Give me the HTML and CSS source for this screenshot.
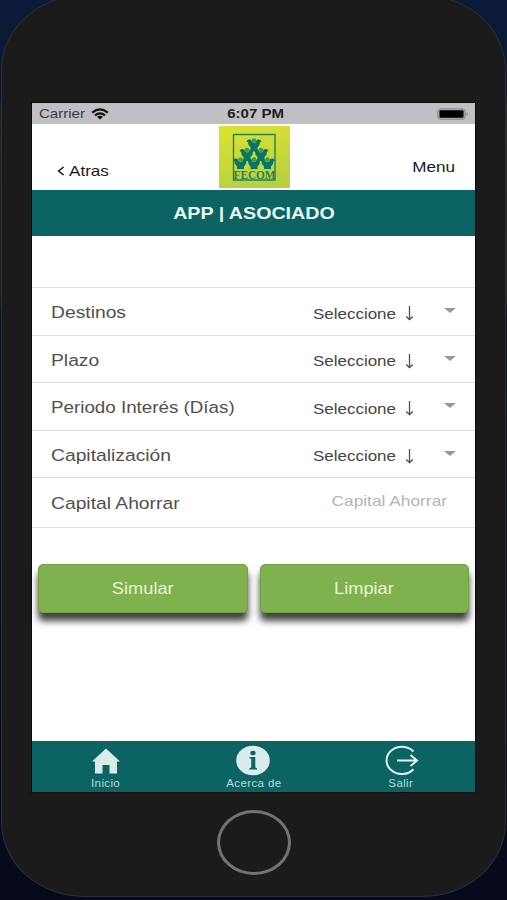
FILE: index.html
```html
<!DOCTYPE html>
<html lang="es">
<head>
    <meta charset="UTF-8">
    <meta name="viewport" content="width=device-width, initial-scale=1.0">
    <title>FECOM | Asociado</title>
    <link rel="stylesheet" href="styles.css">
</head>
<body>
  <div class="phone">
    <div class="screen">
      <div class="status">
        <div class="carrier">
          <span class="wide left">Carrier</span>
          <svg class="wifi" viewBox="0 0 18 12">
            <path d="M1.200 4.600Q9-1.800 16.800 4.600M4 7.300Q9 3.400 14 7.300" fill="none" stroke="#111" stroke-width="2.200"/>
            <path d="M6 8.800Q9 6.800 12 8.800L9 11.500z" fill="#111"/>
          </svg>
        </div>
        <b class="wide">6:07 PM</b>
        <svg class="battery" viewBox="0 0 32 12">
          <rect x=".8" y=".8" width="27.400" height="10.400" rx="2.500" fill="#aaa9ad" stroke="#8a898d"/>
          <rect x="2.500" y="2.200" width="24" height="7.600" rx="1" fill="#000"/>
          <path d="M29.700 4.200q2 1.800 0 3.600z" fill="#77767a"/>
        </svg>
      </div>

      <header class="header">
        <a class="back">
          <svg viewBox="0 0 8 10"><path d="M6.600 1L1.600 5l5 4" fill="none" stroke="#111" stroke-width="1.500"/></svg>
          <span class="wide left">Atras</span>
        </a>
        <svg class="logo" viewBox="0 0 71 62">
          <defs>
            <linearGradient id="lime" x1="0" y1="0" x2=".3" y2="1">
              <stop offset="0" stop-color="#dce42f"/>
              <stop offset="1" stop-color="#b9d13f"/>
            </linearGradient>
            <g id="plant">
              <path d="M-7.500-3.500Q-6.500-6-4-5.500-2-5-1.800-2.800 0-1.200 1.800-2.800 2-5 4-5.500 6.500-6 7.500-3.500L6-2.800Q6 1 3.500 2.500V5H-3.500V2.500Q-6 1-6-2.800z" fill="#0b7565"/>
              <circle cy="-4.500" r="2.300" fill="#3aa04c"/>
            </g>
          </defs>
          <rect width="71" height="62" fill="url(#lime)"/>
          <path d="M14.500 54V8.500H56V54z" fill="none" stroke="#23835a" stroke-width="1.400"/>
          <use href="#plant" x="35" y="19"/>
          <use href="#plant" x="28" y="28.500"/>
          <use href="#plant" x="42" y="28.500"/>
          <use href="#plant" x="21.500" y="38"/>
          <use href="#plant" x="35" y="38"/>
          <use href="#plant" x="48.500" y="38"/>
          <text x="14.500" y="53.300" textLength="42" lengthAdjust="spacingAndGlyphs">FECOM</text>
        </svg>
        <a class="menu wide right">Menu</a>
      </header>

      <div class="title"><span class="wide">APP | ASOCIADO</span></div>

      <form class="form">
        <div class="row">
          <label class="wide left">Destinos</label>
          <div class="select">
            <span class="wide left">Seleccione</span>
            <svg class="arrow" viewBox="0 0 9 15"><path d="M4.500 0V13M1.200 10.500L4.500 13.500 7.800 10.500" /></svg>
            <i class="caret"></i>
          </div>
        </div>
        <div class="row">
          <label class="wide left">Plazo</label>
          <div class="select">
            <span class="wide left">Seleccione</span>
            <svg class="arrow" viewBox="0 0 9 15"><path d="M4.500 0V13M1.200 10.500L4.500 13.500 7.800 10.500" /></svg>
            <i class="caret"></i>
          </div>
        </div>
        <div class="row">
          <label class="wide left long">Periodo Interés (Días)</label>
          <div class="select">
            <span class="wide left">Seleccione</span>
            <svg class="arrow" viewBox="0 0 9 15"><path d="M4.500 0V13M1.200 10.500L4.500 13.500 7.800 10.500" /></svg>
            <i class="caret"></i>
          </div>
        </div>
        <div class="row">
          <label class="wide left">Capitalización</label>
          <div class="select">
            <span class="wide left">Seleccione</span>
            <svg class="arrow" viewBox="0 0 9 15"><path d="M4.500 0V13M1.200 10.500L4.500 13.500 7.800 10.500" /></svg>
            <i class="caret"></i>
          </div>
        </div>
        <div class="row last">
          <label class="wide left">Capital Ahorrar</label>
          <span class="hint wide right">Capital Ahorrar</span>
        </div>
      </form>

      <div class="buttons">
        <button type="button"><span class="wide">Simular</span></button>
        <button type="button"><span class="wide">Limpiar</span></button>
      </div>

      <footer class="tabs">
        <a class="tab">
          <svg viewBox="0 0 36 32"><path d="M18 3.500L4 16.500H7V28.500H14.500V20H21.500V28.500H29V16.500H32z" fill="#d9eceb"/></svg>
          <span class="wide">Inicio</span>
        </a>
        <a class="tab">
          <svg viewBox="0 0 36 32">
            <ellipse cx="18" cy="15.500" rx="16.800" ry="14.700" fill="#d9eceb"/>
            <ellipse cx="18" cy="8" rx="2.700" ry="2.200" fill="#0b6462"/>
            <path d="M14.500 12H20.300V22.500L22 23.300V24.500H14.300V23.300L16.200 22.500V13.800L14.500 13.300z" fill="#0b6462"/>
          </svg>
          <span class="wide">Acerca de</span>
        </a>
        <a class="tab">
          <svg viewBox="0 0 36 32">
            <path d="M30.500 6.500A15.300 13.700 0 1 0 30.500 24.300M14 15.500H33.500M27.500 10L34 15.500 27.500 21" fill="none" stroke="#e0f1f0" stroke-width="2"/>
          </svg>
          <span class="wide">Salir</span>
        </a>
      </footer>
    </div>
    <div class="home"></div>
  </div>
</body>
</html>
```
FILE: styles.css
```css
* {
  box-sizing: border-box;
}
body {
  margin: 0;
  height: 900px;
  overflow: hidden;
  background: linear-gradient(#0b1b38 0, #0b1830 100px, #25262b 105px, #1c1e24 300px, #0a1024 315px, #060a1b 900px);
  font-family: "Liberation Sans", Arial, sans-serif;
}
.phone {
  width: 503px;
  height: 900px;
  margin: -4px 0 0 2px;
  padding-top: 107px;
  background: #1b1b1b;
  border-radius: 82px / 74px;
  box-shadow: 0 0 0 1px #2b3038;
}
.screen {
  display: flex;
  flex-direction: column;
  width: 443px;
  height: 689px;
  margin-left: 30px;
  background: #fff;
  box-shadow: 0 0 0 1px #0c0c0c;
}
/* the simulator window is stretched sideways */
.wide {
  display: inline-block;
  transform: scaleX(1.155);
  white-space: nowrap;
}
.left {
  transform-origin: left;
}
.right {
  transform-origin: right;
}
.status {
  display: grid;
  grid-template-columns: 1fr auto 1fr;
  align-items: center;
  height: 21px;
  padding: 0 6px 0 7px;
  background: #c0bfc4;
  color: #1c1c1e;
  font-size: 13px;
}
.status b {
  position: relative;
  left: 2px;
}
.carrier {
  display: flex;
  align-items: center;
  color: #3a3a3c;
}
.carrier .left {
  width: 52px;
}
.wifi {
  width: 18px;
  height: 12px;
}
.battery {
  width: 32px;
  height: 12px;
  justify-self: end;
}
.header {
  display: grid;
  grid-template-columns: 1fr 71px 1fr;
  height: 66px;
  padding: 2px 20px 0 25px;
  color: #1a1a1a;
  font-size: 14.800px;
}
.back {
  display: flex;
  align-items: center;
  gap: 4px;
  padding-top: 25px;
}
.back svg {
  width: 8px;
  height: 10px;
}
.logo {
  position: relative;
  left: -2px;
  width: 71px;
  height: 62px;
}
.logo text {
  font: bold 12px "Liberation Serif", serif;
  fill: #23835a;
}
.menu {
  justify-self: end;
  padding-top: 33px;
}
.title {
  height: 46px;
  background: #0b6462;
  color: #e9f7f6;
  font-size: 17px;
  font-weight: bold;
  line-height: 47px;
  text-align: center;
}
.form {
  margin-top: 51px;
  border-top: 1px solid #dedede;
}
.row {
  display: flex;
  align-items: center;
  justify-content: space-between;
  height: 47.500px;
  padding: 4px 19px 0 19px;
  border-bottom: 1px solid #dedede;
  color: #505050;
  font-size: 16.700px;
}
.row .long {
  transform: scaleX(1.125);
}
.row.last {
  height: 49.500px;
  padding: 4px 28px 0 19px;
}
.select {
  display: flex;
  align-items: center;
  width: 143px;
  padding-top: 1px;
  color: #454545;
  font-size: 14.700px;
}
.select .left {
  width: 92px;
}
.arrow {
  width: 9px;
  height: 15px;
}
.arrow path {
  fill: none;
  stroke: #505050;
  stroke-width: 1.300;
}
.caret {
  margin: -6px 0 0 auto;
  border: 6px solid transparent;
  border-top: 5.500px solid #999;
  border-bottom: 0;
}
.hint {
  margin-top: -7px;
  color: #b5b5b5;
  font-size: 15px;
}
.buttons {
  display: flex;
  gap: 12px;
  margin-top: 36px;
  padding: 0 6px;
}
.buttons button {
  flex: 1;
  height: 49px;
  padding: 1px 0 0;
  border: 1px solid #6fa242;
  border-radius: 5px;
  background: #7fb24f;
  box-shadow: 0 8px 7px rgba(0, 0, 0, .75);
  color: #e6f5d5;
  font-family: inherit;
  font-size: 15.800px;
}
.tabs {
  display: grid;
  grid-template-columns: repeat(3, 1fr);
  height: 51px;
  margin-top: auto;
  background: #0b6462;
}
.tab {
  display: flex;
  flex-direction: column;
  align-items: center;
  padding-top: 4px;
  color: #b9d9d8;
  font-size: 10px;
  line-height: 12px;
  letter-spacing: .3px;
}
.tab svg {
  width: 36px;
  height: 32px;
}
.tab .wide {
  margin-top: 1px;
}
.home {
  width: 74px;
  height: 65px;
  margin: 18px auto 0;
  border: 3px solid #737373;
  border-radius: 50%;
}
```
